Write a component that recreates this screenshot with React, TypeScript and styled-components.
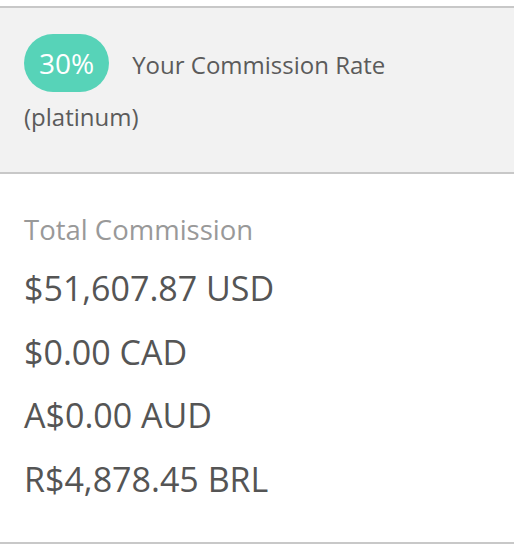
import React from 'react'
import styled, { createGlobalStyle } from 'styled-components'

const GlobalStyle = createGlobalStyle`
  body {
    margin: 0;
    background: #ffffff;
    font-family: "Open Sans", "Noto Sans", sans-serif;
  }
`

const Page = styled.div`
  padding-top: 6px;
  width: 514px;
`

const RatePanel = styled.section`
  background: #f2f2f2;
  border-top: 2px solid #c8c8c8;
  border-bottom: 2px solid #c8c8c8;
  padding: 26px 24px 30px;
  color: #5b5b5b;
  font-size: 24px;
  line-height: 50px;
`

const Badge = styled.span`
  display: inline-block;
  vertical-align: baseline;
  height: 58px;
  line-height: 58px;
  padding: 0 15px;
  margin-right: 23px;
  border-radius: 29px;
  background: #57d3b8;
  color: #ffffff;
  font-size: 28px;
`

const TotalsPanel = styled.section`
  padding: 36px 24px 31px;
  border-bottom: 2px solid #c8c8c8;
`

const TotalsLabel = styled.div`
  color: #999999;
  font-size: 27.5px;
  line-height: 40px;
  margin-bottom: 7px;
`

const Amount = styled.div`
  color: #555555;
  font-size: 34px;
  line-height: 63.5px;
`

const amounts = ['$51,607.87 USD', '$0.00 CAD', 'A$0.00 AUD', 'R$4,878.45 BRL']

export default function App() {
  return (
    <Page>
      <GlobalStyle />
      <RatePanel>
        <Badge>30%</Badge>
        Your Commission Rate (platinum)
      </RatePanel>
      <TotalsPanel>
        <TotalsLabel>Total Commission</TotalsLabel>
        {amounts.map(a => (
          <Amount key={a}>{a}</Amount>
        ))}
      </TotalsPanel>
    </Page>
  )
}
